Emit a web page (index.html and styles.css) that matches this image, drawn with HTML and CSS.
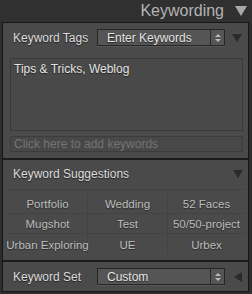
FILE: index.html
```html
<!DOCTYPE html>
<html lang="en">
  <head>
    <meta charset="UTF-8" />
    <title>Keywording</title>
    <link rel="stylesheet" href="styles.css">
  </head>
  <body>
    <div class="panel-title">
      <span>Keywording</span>
      <span class="tri tri-down big"></span>
    </div>
    <div class="panel">
      <div class="section">
        <div class="row">
          <span class="label">Keyword Tags</span>
          <div class="select">
            <span class="select-text">Enter Keywords</span>
            <span class="stepper"><i class="up"></i><i class="down"></i></span>
          </div>
          <span class="tri tri-down"></span>
        </div>
        <div class="tags-box">Tips &amp; Tricks, Weblog</div>
        <div class="add-box">Click here to add keywords</div>
      </div>

      <div class="section">
        <div class="row head">
          <span class="label">Keyword Suggestions</span>
          <span class="tri tri-down"></span>
        </div>
        <div class="suggest-grid">
          <div class="cell">Portfolio</div>
          <div class="cell">Wedding</div>
          <div class="cell">52 Faces</div>
          <div class="cell">Mugshot</div>
          <div class="cell">Test</div>
          <div class="cell">50/50-project</div>
          <div class="cell">Urban Exploring</div>
          <div class="cell">UE</div>
          <div class="cell">Urbex</div>
        </div>
      </div>

      <div class="section last">
        <div class="row">
          <span class="label">Keyword Set</span>
          <div class="select">
            <span class="select-text">Custom</span>
            <span class="stepper"><i class="up"></i><i class="down"></i></span>
          </div>
          <span class="tri tri-left"></span>
        </div>
      </div>
    </div>
  </body>
</html>
```

FILE: styles.css
```css
body {
  margin: 0;
  background-color: #2d2d2d;
  font-family: "Liberation Sans", Arial, sans-serif;
  color: #dcdcdc;
  width: 252px;
  height: 294px;
  overflow: hidden;
}
.panel-title {
  height: 22px;
  display: flex;
  align-items: center;
  justify-content: flex-end;
  gap: 11px;
  padding-right: 5px;
  font-size: 16px;
  color: #b4b4b4;
  background-color: #303030;
}
.panel {
  margin: 0 3px 0 2px;
  border: 1px solid #161616;
  background-color: #4a4a4a;
}
.section {
  border-bottom: 2px solid #1c1c1c;
}
.section.last {
  border-bottom: none;
}
.row {
  height: 29px;
  display: flex;
  align-items: center;
  padding: 0 5px 0 10px;
  font-size: 12px;
  text-shadow: 0 1px 1px #222;
}
.row.head {
  height: 27px;
  padding-top: 1px;
  box-sizing: border-box;
}
.label {
  width: 84px;
  flex-shrink: 0;
  white-space: nowrap;
}
.row.head .label {
  width: auto;
}
.select {
  width: 126px;
  height: 15px;
  display: flex;
  align-items: center;
  border: 1px solid #262626;
  background-color: #555;
  box-shadow: 0 1px 0 #575757;
}
.select-text {
  flex: 1;
  padding-left: 9px;
  color: #e6e6e6;
}
.stepper {
  width: 13px;
  height: 15px;
  border-left: 1px solid #2a2a2a;
  display: flex;
  flex-direction: column;
  align-items: center;
  justify-content: center;
  gap: 2px;
}
.stepper i {
  width: 0;
  height: 0;
  border-left: 3px solid transparent;
  border-right: 3px solid transparent;
}
.stepper .up {
  border-bottom: 3px solid #bbb;
}
.stepper .down {
  border-top: 3px solid #bbb;
}
.tri {
  width: 0;
  height: 0;
}
.row .tri {
  margin-left: auto;
}
.tri-down {
  border-left: 5px solid transparent;
  border-right: 5px solid transparent;
  border-top: 8px solid #2a2a2a;
}
.tri-down.big {
  border-left-width: 6px;
  border-right-width: 6px;
  border-top: 10px solid #a8a8a8;
}
.tri-left {
  border-top: 5px solid transparent;
  border-bottom: 5px solid transparent;
  border-right: 8px solid #2a2a2a;
  margin-right: 2px;
}
.row .select + .tri {
  margin-right: 1px;
}
.tags-box {
  margin: 6px 5px 0 7px;
  height: 65px;
  padding: 3px 3px;
  border: 1px solid #3a3a3a;
  background-color: #494949;
  font-size: 12px;
  color: #e4e4e4;
  text-shadow: 0 1px 1px #222;
}
.add-box {
  margin: 5px 5px 6px 7px;
  height: 14px;
  padding-left: 3px;
  border: 1px solid #3c3c3c;
  background-color: #484848;
  font-size: 12px;
  line-height: 14px;
  color: #747474;
}
.suggest-grid {
  display: grid;
  grid-template-columns: 80px 80px 1fr;
  grid-auto-rows: 20px;
  margin: 2px 3px 6px 5px;
  border-top: 1px solid #434343;
  padding-top: 4px;
}
.cell {
  display: flex;
  align-items: center;
  justify-content: center;
  padding-top: 1px;
  box-sizing: border-box;
  font-size: 11.5px;
  color: #bdbdbd;
  text-shadow: 0 1px 1px #2a2a2a;
  border-right: 1px solid #434343;
  border-bottom: 1px solid #434343;
  white-space: nowrap;
}
.cell:nth-child(3n) {
  border-right: none;
}
.cell:nth-child(n+7) {
  border-bottom: none;
}
```
